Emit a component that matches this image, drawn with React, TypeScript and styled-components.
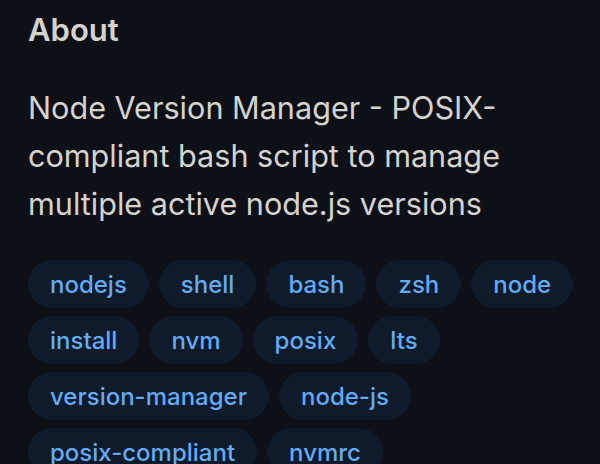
import styled, { createGlobalStyle } from "styled-components";

const GlobalStyle = createGlobalStyle`
  html, body {
    margin: 0;
    padding: 0;
    background: #0d1117;
  }
  body {
    font-family: Inter, "Noto Sans", "Liberation Sans", sans-serif;
    -webkit-font-smoothing: antialiased;
  }
`;

const Sidebar = styled.section`
  width: 560px;
  padding: 8px 12px 0 28px;
  box-sizing: content-box;
  min-height: 456px;
`;

const Heading = styled.h2`
  margin: 0 0 32px;
  font-size: 31px;
  font-weight: 600;
  line-height: 44px;
  color: #d6d3ce;
`;

const Description = styled.p`
  margin: 0 0 32px;
  max-width: 544px;
  font-size: 30.6px;
  font-weight: 400;
  line-height: 48px;
  color: #d6d3ce;
`;

const TagList = styled.div`
  display: flex;
  flex-wrap: wrap;
  gap: 8px 10px;
`;

const Tag = styled.a`
  display: inline-flex;
  align-items: center;
  height: 48px;
  padding: 0 22px;
  border-radius: 24px;
  background: #0f1a2a;
  color: #62abf5;
  font-size: 24px;
  font-weight: 500;
  text-decoration: none;
  white-space: nowrap;
`;

const topics = [
  "nodejs",
  "shell",
  "bash",
  "zsh",
  "node",
  "install",
  "nvm",
  "posix",
  "lts",
  "version-manager",
  "node-js",
  "posix-compliant",
  "nvmrc",
];

const App = () => {
  return (
    <>
      <GlobalStyle />
      <Sidebar>
        <Heading>About</Heading>
        <Description>
          Node Version Manager - POSIX-compliant bash script to manage multiple
          active node.js versions
        </Description>
        <TagList>
          {topics.map((t) => (
            <Tag key={t} href="#">
              {t}
            </Tag>
          ))}
        </TagList>
      </Sidebar>
    </>
  );
};

export default App;
